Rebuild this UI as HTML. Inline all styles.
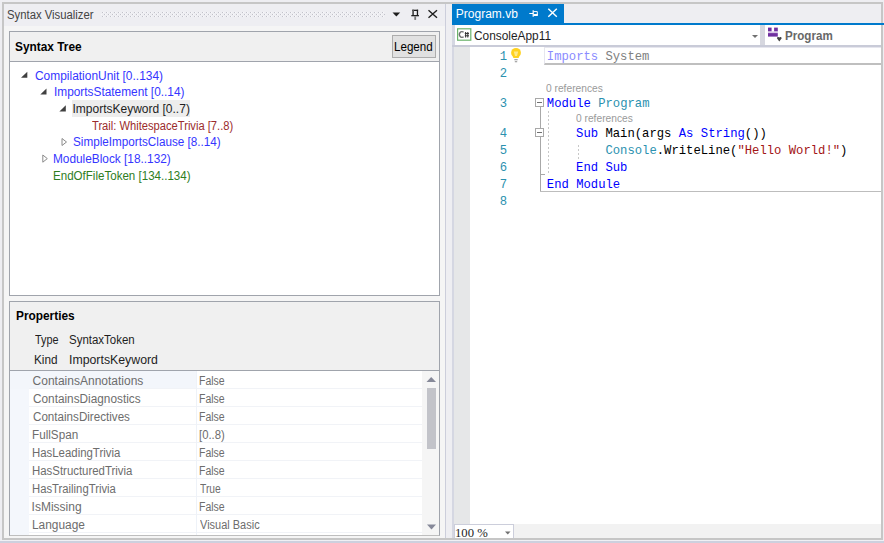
<!DOCTYPE html>
<html><head><meta charset="utf-8"><style>
html,body{margin:0;padding:0;width:884px;height:543px;overflow:hidden;background:#EEEEF2}
.t{position:absolute;white-space:pre;line-height:20px;transform-origin:0 0}
.c{position:absolute;white-space:pre;font-family:'Liberation Mono',monospace;font-size:12.22px;line-height:17px}
.ln{position:absolute;left:470px;width:37px;text-align:right;white-space:pre;font-family:'Liberation Mono',monospace;font-size:12.22px;line-height:17px;color:#2B91AF}
</style></head><body>
<div style="position:absolute;left:0px;top:0px;width:884px;height:543px;background:#EEEEF2"></div><div style="position:absolute;left:0px;top:540px;width:884px;height:1px;background:#F0F0F4"></div><div style="position:absolute;left:0px;top:541px;width:884px;height:2px;background:#CDD0DE"></div><div style="position:absolute;left:2px;top:2px;width:881px;height:538px;border:2px solid #C6C6C6;box-sizing:border-box;background:#F5F5F5"></div><div style="position:absolute;left:4px;top:4px;width:441px;height:22px;background:#EEEEF2"></div><div style="position:absolute;left:445px;top:4px;width:1px;height:534px;background:#CCCEDB"></div><div style="position:absolute;left:446px;top:4px;width:6px;height:534px;background:#EEEEF2"></div><svg style="position:absolute;left:101px;top:12px" width="284" height="5"><defs><pattern id="gp" width="4" height="4" patternUnits="userSpaceOnUse"><rect x="1" y="0" width="1" height="1" fill="#C2C2CA"/><rect x="3" y="2" width="1" height="1" fill="#C2C2CA"/><rect x="2" y="0" width="1" height="1" fill="#F8F8FB"/><rect x="0" y="2" width="1" height="1" fill="#F8F8FB"/></pattern></defs><rect width="284" height="5" fill="url(#gp)"/></svg><div style="position:absolute;left:9px;top:31px;width:431px;height:31px;border:1px solid #A0A4AC;box-sizing:border-box;background:#F0F0F0"></div><div style="position:absolute;left:392px;top:35px;width:44px;height:23px;border:1px solid #ADADAD;box-sizing:border-box;background:#E1E1E1"></div><div style="position:absolute;left:9px;top:62px;width:431px;height:234px;border:1px solid #A0A4AC;border-top:none;box-sizing:border-box;background:#fff"></div><div style="position:absolute;left:72px;top:100px;width:118px;height:17px;background:#EDEDED"></div><div style="position:absolute;left:9px;top:301px;width:431px;height:235px;border:1px solid #A0A4AC;border-bottom-color:#BEBEBE;box-sizing:border-box;background:#fff"></div><div style="position:absolute;left:10px;top:302px;width:429px;height:68px;background:#F0F0F0"></div><div style="position:absolute;left:10px;top:370px;width:429px;height:1px;background:#A0A4AC"></div><div style="position:absolute;left:10px;top:371px;width:19px;height:164px;background:#F4F7FC"></div><div style="position:absolute;left:10px;top:371px;width:187px;height:18px;background:#F3F6FB"></div><div style="position:absolute;left:29px;top:388px;width:393px;height:1px;background:#F1F3F7"></div><div style="position:absolute;left:29px;top:406px;width:393px;height:1px;background:#F1F3F7"></div><div style="position:absolute;left:29px;top:424px;width:393px;height:1px;background:#F1F3F7"></div><div style="position:absolute;left:29px;top:442px;width:393px;height:1px;background:#F1F3F7"></div><div style="position:absolute;left:29px;top:460px;width:393px;height:1px;background:#F1F3F7"></div><div style="position:absolute;left:29px;top:478px;width:393px;height:1px;background:#F1F3F7"></div><div style="position:absolute;left:29px;top:496px;width:393px;height:1px;background:#F1F3F7"></div><div style="position:absolute;left:29px;top:514px;width:393px;height:1px;background:#F1F3F7"></div><div style="position:absolute;left:29px;top:532px;width:393px;height:1px;background:#F1F3F7"></div><div style="position:absolute;left:196px;top:371px;width:1px;height:164px;background:#EEF2F8"></div><div style="position:absolute;left:422px;top:371px;width:17px;height:164px;background:#F5F5F5"></div><div style="position:absolute;left:427px;top:388px;width:9px;height:61px;background:#C2C3C9"></div><div style="position:absolute;left:446px;top:4px;width:435px;height:19px;background:#EEEEF2"></div><div style="position:absolute;left:452px;top:4px;width:112px;height:21px;background:#007ACC"></div><div style="position:absolute;left:452px;top:23px;width:432px;height:2px;background:#007ACC"></div><div style="position:absolute;left:452px;top:25px;width:3px;height:20px;background:#D5D7E2"></div><div style="position:absolute;left:452px;top:47px;width:2px;height:491px;background:#D5D7E2"></div><div style="position:absolute;left:455px;top:25px;width:426px;height:20px;background:#fff"></div><div style="position:absolute;left:452px;top:45px;width:429px;height:2px;background:#C9CBD8"></div><div style="position:absolute;left:760px;top:25px;width:5px;height:20px;background:#D6D7DF"></div><div style="position:absolute;left:454px;top:47px;width:16px;height:477px;background:#E6E7E8"></div><div style="position:absolute;left:470px;top:47px;width:411px;height:477px;background:#fff"></div><div style="position:absolute;left:454px;top:524px;width:427px;height:14px;background:#F2F2F2"></div><div style="position:absolute;left:454px;top:524px;width:60px;height:14px;background:#fff;border:1px solid #CCCEDB;border-bottom:none;box-sizing:border-box"></div><div style="position:absolute;left:544px;top:47px;width:337px;height:18px;border-left:1px solid #E6E6EE;border-top:1px solid #E6E6EE;border-bottom:2px solid #BFBFBF;box-sizing:border-box"></div><div style="position:absolute;left:540px;top:107px;width:1px;height:85px;background:#A8A8A8"></div><div style="position:absolute;left:540px;top:191px;width:341px;height:1px;background:#BDBDBD"></div><div style="position:absolute;left:540px;top:174px;width:5px;height:1px;background:#A8A8A8"></div><div style="position:absolute;left:535px;top:98px;width:9px;height:9px;border:1px solid #A8A8A8;box-sizing:border-box;background:#fff"></div><div style="position:absolute;left:537px;top:102px;width:5px;height:1px;background:#707070"></div><div style="position:absolute;left:535px;top:128px;width:9px;height:9px;border:1px solid #A8A8A8;box-sizing:border-box;background:#fff"></div><div style="position:absolute;left:537px;top:132px;width:5px;height:1px;background:#707070"></div><div style="position:absolute;left:548px;top:111px;width:1px;height:64px;background-image:linear-gradient(#C8C8C8 50%,transparent 50%);background-size:1px 4px"></div><div style="position:absolute;left:578px;top:145px;width:1px;height:16px;background-image:linear-gradient(#C8C8C8 50%,transparent 50%);background-size:1px 4px"></div>

<svg style="position:absolute;left:0;top:0" width="884" height="543">
 <!-- title dropdown -->
 <path d="M392.5 12.4 L400.2 12.4 L396.35 16.6 Z" fill="#1E1E1E"/>
 <!-- pin -->
 <rect x="412.2" y="9.7" width="5.9" height="1.3" fill="#1E1E1E"/><rect x="412.2" y="9.7" width="1.8" height="5.6" fill="#555"/><rect x="416.8" y="9.7" width="1.3" height="5.6" fill="#1E1E1E"/><rect x="411.3" y="15" width="7.6" height="1.3" fill="#1E1E1E"/><rect x="414.3" y="16.3" width="1.8" height="3.6" fill="#777"/>
 <!-- close -->
 <path d="M428.5 10.3 L437 17.8 M437 10.3 L428.5 17.8" stroke="#1E1E1E" stroke-width="1.4"/>
 <!-- tree expanders -->
 <path d="M27.3 71.8 L27.3 77.8 L21 77.8 Z" fill="#404040"/>
 <path d="M46.5 88.5 L46.5 94.6 L40.3 94.6 Z" fill="#404040"/>
 <path d="M65.8 105.3 L65.8 111.5 L59.4 111.5 Z" fill="#404040"/>
 <path d="M62 138.5 L66.5 142 L62 145.5 Z" fill="#fff" stroke="#8A8A8A" stroke-width="1"/>
 <path d="M42.8 155 L47.3 158.6 L42.8 162.2 Z" fill="#fff" stroke="#8A8A8A" stroke-width="1"/>
 <!-- scrollbar arrows -->
 <path d="M426.5 382 L431.2 377 L436 382 Z" fill="#868999"/>
 <path d="M427 524.5 L436 524.5 L431.5 529.5 Z" fill="#868999"/>
 <!-- tab pin -->
 <path d="M529.3 13.5 h3.7 M533.2 10.2 v6.5" stroke="#fff" stroke-width="1.2" fill="none"/><path d="M533.5 11.6 h3.8 v3.6" stroke="#fff" stroke-width="1" fill="none"/><rect x="533.5" y="14" width="4.3" height="2" fill="#fff"/>
 <!-- tab close -->
 <path d="M548.3 8.7 L556.8 16.8 M556.8 8.7 L548.3 16.8" stroke="#fff" stroke-width="1.4"/>
 <!-- project icon -->
 <rect x="457.6" y="28.8" width="13.2" height="11.4" fill="#fff" stroke="#6CB36C" stroke-width="1.2"/>
 <path d="M463.6 32.2 A2.6 2.9 0 1 0 463.6 36.8" stroke="#6E6E6E" stroke-width="1.4" fill="none"/>
 <path d="M465.6 32 v5.5 M467.8 32 v5.5 M464.8 33.5 h4.2 M464.8 35.8 h4.2" stroke="#3A3A3A" stroke-width="1.1" fill="none"/>
 <!-- nav dropdown arrows -->
 <path d="M752 35 L758 35 L755 38 Z" fill="#717171"/>
 <!-- module icon -->
 <rect x="768" y="27.6" width="3.6" height="3.9" fill="#7030A0"/>
 <rect x="774.1" y="27.6" width="3.7" height="3.9" fill="#7030A0"/>
 <rect x="768" y="31.5" width="9.8" height="1.6" fill="#D8C4E6"/>
 <rect x="768" y="33.1" width="9.8" height="3.5" fill="#7030A0"/>
 <path d="M776.9 38.2 A1.3 1.3 0 0 1 779.3 37.6 A1.3 1.3 0 0 1 781.7 38.2 L779.3 41.4 Z" fill="#444"/>
 <!-- zoom dropdown -->
 <path d="M505 531.5 L510.5 531.5 L507.8 534.5 Z" fill="#717171"/>
 <!-- lightbulb -->
 <circle cx="516" cy="52.8" r="4.9" fill="#FFD21F"/>
 <rect x="513.2" y="55" width="5.6" height="3" fill="#FFD21F"/>
 <path d="M513.8 51.5 h4.4 l-1.2 4.5 h-2 z" fill="#FFE98A"/>
 <rect x="514.3" y="59" width="3.4" height="1.3" fill="#A8A8A8"/>
 <rect x="514.8" y="61" width="2.4" height="1.3" fill="#A8A8A8"/>
</svg>

<div class="t" style="left:6.66px;top:5px;font-family:'Liberation Sans',sans-serif;font-size:12px;font-weight:400;color:#444444;transform:scaleX(0.9429);">Syntax Visualizer</div>
<div class="t" style="left:15.20px;top:37px;font-family:'Liberation Sans',sans-serif;font-size:12px;font-weight:700;color:#000;transform:scaleX(0.9881);">Syntax Tree</div>
<div class="t" style="left:393.63px;top:37px;font-family:'Liberation Sans',sans-serif;font-size:12px;font-weight:400;color:#000;transform:scaleX(0.9667);">Legend</div>
<div class="t" style="left:35.10px;top:66px;font-family:'Liberation Sans',sans-serif;font-size:12px;font-weight:400;color:#3535ff;transform:scaleX(0.9945);">CompilationUnit [0..134)</div>
<div class="t" style="left:53.71px;top:82px;font-family:'Liberation Sans',sans-serif;font-size:12px;font-weight:400;color:#3535ff;transform:scaleX(0.9878);">ImportsStatement [0..14)</div>
<div class="t" style="left:72.50px;top:99px;font-family:'Liberation Sans',sans-serif;font-size:12px;font-weight:400;color:#1e1e1e;">ImportsKeyword [0..7)</div>
<div class="t" style="left:92.30px;top:116px;font-family:'Liberation Sans',sans-serif;font-size:12px;font-weight:400;color:#9b2c2c;transform:scaleX(0.9298);">Trail: WhitespaceTrivia [7..8)</div>
<div class="t" style="left:72.52px;top:132px;font-family:'Liberation Sans',sans-serif;font-size:12px;font-weight:400;color:#3535ff;transform:scaleX(0.9760);">SimpleImportsClause [8..14)</div>
<div class="t" style="left:53.41px;top:149px;font-family:'Liberation Sans',sans-serif;font-size:12px;font-weight:400;color:#3535ff;transform:scaleX(0.9864);">ModuleBlock [18..132)</div>
<div class="t" style="left:53.44px;top:166px;font-family:'Liberation Sans',sans-serif;font-size:12px;font-weight:400;color:#2e7d1e;transform:scaleX(0.9638);">EndOfFileToken [134..134)</div>
<div class="t" style="left:15.50px;top:306px;font-family:'Liberation Sans',sans-serif;font-size:12px;font-weight:700;color:#000;transform:scaleX(0.9881);">Properties</div>
<div class="t" style="left:35.40px;top:330px;font-family:'Liberation Sans',sans-serif;font-size:12px;font-weight:400;color:#1e1e1e;transform:scaleX(0.9038);">Type</div>
<div class="t" style="left:68.84px;top:330px;font-family:'Liberation Sans',sans-serif;font-size:12px;font-weight:400;color:#1e1e1e;transform:scaleX(0.9567);">SyntaxToken</div>
<div class="t" style="left:34.42px;top:350px;font-family:'Liberation Sans',sans-serif;font-size:12px;font-weight:400;color:#1e1e1e;transform:scaleX(0.9826);">Kind</div>
<div class="t" style="left:68.77px;top:350px;font-family:'Liberation Sans',sans-serif;font-size:12px;font-weight:400;color:#1e1e1e;transform:scaleX(1.0259);">ImportsKeyword</div>
<div class="t" style="left:32.60px;top:371px;font-family:'Liberation Sans',sans-serif;font-size:12px;font-weight:400;color:#6d6d6d;">ContainsAnnotations</div>
<div class="t" style="left:198.62px;top:371px;font-family:'Liberation Sans',sans-serif;font-size:12px;font-weight:400;color:#6d6d6d;transform:scaleX(0.8750);">False</div>
<div class="t" style="left:32.60px;top:389px;font-family:'Liberation Sans',sans-serif;font-size:12px;font-weight:400;color:#6d6d6d;transform:scaleX(0.9835);">ContainsDiagnostics</div>
<div class="t" style="left:198.62px;top:389px;font-family:'Liberation Sans',sans-serif;font-size:12px;font-weight:400;color:#6d6d6d;transform:scaleX(0.8750);">False</div>
<div class="t" style="left:32.60px;top:407px;font-family:'Liberation Sans',sans-serif;font-size:12px;font-weight:400;color:#6d6d6d;transform:scaleX(0.9690);">ContainsDirectives</div>
<div class="t" style="left:198.62px;top:407px;font-family:'Liberation Sans',sans-serif;font-size:12px;font-weight:400;color:#6d6d6d;transform:scaleX(0.8750);">False</div>
<div class="t" style="left:31.63px;top:425px;font-family:'Liberation Sans',sans-serif;font-size:12px;font-weight:400;color:#6d6d6d;transform:scaleX(0.9739);">FullSpan</div>
<div class="t" style="left:198.56px;top:425px;font-family:'Liberation Sans',sans-serif;font-size:12px;font-weight:400;color:#6d6d6d;transform:scaleX(0.9423);">[0..8)</div>
<div class="t" style="left:31.65px;top:443px;font-family:'Liberation Sans',sans-serif;font-size:12px;font-weight:400;color:#6d6d6d;transform:scaleX(0.9500);">HasLeadingTrivia</div>
<div class="t" style="left:198.62px;top:443px;font-family:'Liberation Sans',sans-serif;font-size:12px;font-weight:400;color:#6d6d6d;transform:scaleX(0.8750);">False</div>
<div class="t" style="left:31.65px;top:461px;font-family:'Liberation Sans',sans-serif;font-size:12px;font-weight:400;color:#6d6d6d;transform:scaleX(0.9514);">HasStructuredTrivia</div>
<div class="t" style="left:198.62px;top:461px;font-family:'Liberation Sans',sans-serif;font-size:12px;font-weight:400;color:#6d6d6d;transform:scaleX(0.8750);">False</div>
<div class="t" style="left:31.66px;top:479px;font-family:'Liberation Sans',sans-serif;font-size:12px;font-weight:400;color:#6d6d6d;transform:scaleX(0.9409);">HasTrailingTrivia</div>
<div class="t" style="left:199.50px;top:479px;font-family:'Liberation Sans',sans-serif;font-size:12px;font-weight:400;color:#6d6d6d;transform:scaleX(0.8542);">True</div>
<div class="t" style="left:31.60px;top:497px;font-family:'Liberation Sans',sans-serif;font-size:12px;font-weight:400;color:#6d6d6d;">IsMissing</div>
<div class="t" style="left:198.62px;top:497px;font-family:'Liberation Sans',sans-serif;font-size:12px;font-weight:400;color:#6d6d6d;transform:scaleX(0.8750);">False</div>
<div class="t" style="left:31.61px;top:515px;font-family:'Liberation Sans',sans-serif;font-size:12px;font-weight:400;color:#6d6d6d;transform:scaleX(0.9923);">Language</div>
<div class="t" style="left:199.50px;top:515px;font-family:'Liberation Sans',sans-serif;font-size:12px;font-weight:400;color:#6d6d6d;transform:scaleX(0.9154);">Visual Basic</div>
<div class="t" style="left:455.80px;top:4px;font-family:'Liberation Sans',sans-serif;font-size:12px;font-weight:400;color:#ffffff;">Program.vb</div>
<div class="t" style="left:474.40px;top:26px;font-family:'Liberation Sans',sans-serif;font-size:12px;font-weight:400;color:#1e1e1e;transform:scaleX(0.9897);">ConsoleApp11</div>
<div class="t" style="left:785.40px;top:26px;font-family:'Liberation Sans',sans-serif;font-size:12px;font-weight:700;color:#686868;transform:scaleX(0.9673);">Program</div>
<div class="t" style="left:455.04px;top:523px;font-family:'Liberation Serif',serif;font-size:12px;font-weight:400;color:#1e1e1e;transform:scaleX(1.0567);">100 %</div>
<div class="t" style="left:546.30px;top:79px;font-family:'Liberation Sans',sans-serif;font-size:10px;font-weight:400;color:#9a9a9a;transform:scaleX(1.0218);">0 references</div>
<div class="t" style="left:575.60px;top:109px;font-family:'Liberation Sans',sans-serif;font-size:10px;font-weight:400;color:#9a9a9a;transform:scaleX(1.0218);">0 references</div>
<div class="c" style="left:546.80px;top:49px"><span style="color:#8A8AFF">Imports</span><span style="color:#808080"> System</span></div>
<div class="c" style="left:546.80px;top:96px"><span style="color:#0000FF">Module</span><span style="color:#000000"> </span><span style="color:#2B91AF">Program</span></div>
<div class="c" style="left:576.12px;top:126px"><span style="color:#0000FF">Sub</span><span style="color:#000000"> Main(args </span><span style="color:#0000FF">As</span><span style="color:#000000"> </span><span style="color:#0000FF">String</span><span style="color:#000000">())</span></div>
<div class="c" style="left:605.44px;top:143px"><span style="color:#2B91AF">Console</span><span style="color:#000000">.WriteLine(</span><span style="color:#A31515">"Hello World!"</span><span style="color:#000000">)</span></div>
<div class="c" style="left:576.12px;top:160px"><span style="color:#0000FF">End</span><span style="color:#000000"> </span><span style="color:#0000FF">Sub</span></div>
<div class="c" style="left:546.80px;top:177px"><span style="color:#0000FF">End</span><span style="color:#000000"> </span><span style="color:#0000FF">Module</span></div>
<div class="ln" style="top:49px">1</div>
<div class="ln" style="top:66px">2</div>
<div class="ln" style="top:96px">3</div>
<div class="ln" style="top:126px">4</div>
<div class="ln" style="top:143px">5</div>
<div class="ln" style="top:160px">6</div>
<div class="ln" style="top:177px">7</div>
<div class="ln" style="top:194px">8</div>
</body></html>
